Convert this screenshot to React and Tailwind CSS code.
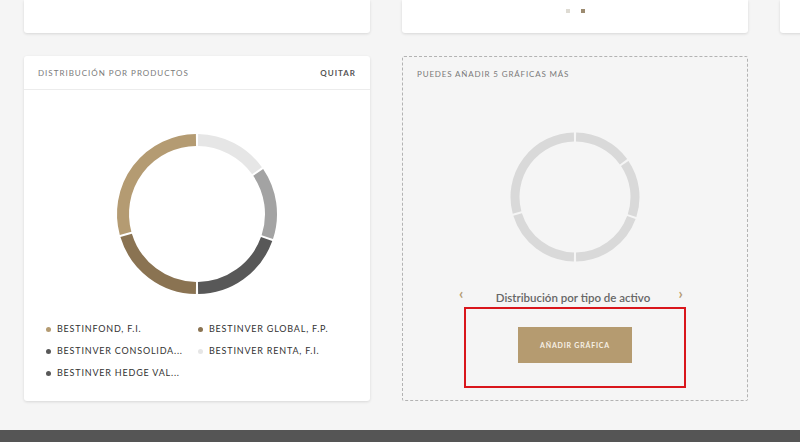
import React from 'react';

const font = { fontFamily: 'Lato, "Open Sans", sans-serif' };

function arcPath(cx, cy, r, a0, a1) {
  const rad = a => ((a - 90) * Math.PI) / 180;
  const x0 = cx + r * Math.cos(rad(a0));
  const y0 = cy + r * Math.sin(rad(a0));
  const x1 = cx + r * Math.cos(rad(a1));
  const y1 = cy + r * Math.sin(rad(a1));
  const large = a1 - a0 > 180 ? 1 : 0;
  return `M ${x0} ${y0} A ${r} ${r} 0 ${large} 1 ${x1} ${y1}`;
}

// segment boundaries in degrees, clockwise from top
const segments = [
  { from: 0, to: 55, color: '#e6e6e6' },
  { from: 55, to: 109, color: '#a3a3a3' },
  { from: 109, to: 180, color: '#585858' },
  { from: 180, to: 254, color: '#8a7352' },
  { from: 254, to: 360, color: '#b49b72' },
];

function Donut({ size, r, width, gap, colorFor }) {
  const c = size / 2;
  return (
    <svg width={size} height={size} viewBox={`0 0 ${size} ${size}`}>
      {segments.map((s, i) => (
        <path
          key={i}
          d={arcPath(c, c, r, s.from + gap, s.to - gap)}
          fill="none"
          stroke={colorFor(s)}
          strokeWidth={width}
        />
      ))}
    </svg>
  );
}

const legend = [
  { label: 'BESTINFOND, F.I.', color: '#b49b72' },
  { label: 'BESTINVER GLOBAL, F.P.', color: '#8a7352' },
  { label: 'BESTINVER CONSOLIDA...', color: '#585858' },
  { label: 'BESTINVER RENTA, F.I.', color: '#e6e6e6' },
  { label: 'BESTINVER HEDGE VAL...', color: '#585858' },
];

export default function App() {
  return (
    <div className="w-[800px] h-[442px] bg-[#f5f5f5] overflow-hidden flex flex-col" style={font}>
      {/* top row (cut off) */}
      <div className="flex gap-8 pl-6 h-[33px] shrink-0">
        <div className="w-[346px] shrink-0 bg-white rounded-b-[3px] shadow-[0_1px_3px_rgba(0,0,0,0.12)]" />
        <div className="w-[346px] shrink-0 bg-white rounded-b-[3px] shadow-[0_1px_3px_rgba(0,0,0,0.12)] flex justify-center pt-[9px] gap-[11px]">
          <span className="w-[4px] h-[4px] bg-[#dedbd3]" />
          <span className="w-[4px] h-[4px] bg-[#9c8b70]" />
        </div>
        <div className="w-[346px] shrink-0 bg-white rounded-b-[3px] shadow-[0_1px_3px_rgba(0,0,0,0.12)]" />
      </div>

      {/* chart row */}
      <div className="flex gap-8 pl-6 mt-[23px] h-[345px] shrink-0">
        <div className="w-[346px] shrink-0 bg-white rounded-[3px] shadow-[0_1px_3px_rgba(0,0,0,0.12)] flex flex-col">
          <div className="h-[34px] flex items-center justify-between px-[14px] border-b border-[#ececec]">
            <span className="text-[8px] tracking-[1px] text-[#7a7a7a]">DISTRIBUCIÓN POR PRODUCTOS</span>
            <span className="text-[8px] tracking-[1px] font-bold text-[#555]">QUITAR</span>
          </div>
          <div className="flex justify-center mt-[39px]">
            <Donut size={170} r={74} width={12} gap={0.8} colorFor={s => s.color} />
          </div>
          <div className="grid grid-cols-[152px_1fr] pl-[22px] mt-[19px]">
            {legend.map(item => (
              <div key={item.label} className="h-[22px] flex items-center gap-[6px]">
                <span className="w-[5px] h-[5px] rounded-full" style={{ background: item.color }} />
                <span className="text-[9px] tracking-[0.8px] text-[#333]">{item.label}</span>
              </div>
            ))}
          </div>
        </div>

        <div className="w-[346px] shrink-0 border border-dashed border-[#b3b3b3] rounded-[2px] flex flex-col items-center">
          <div className="self-stretch h-[33px] flex items-center px-[14px]">
            <span className="text-[8px] tracking-[0.85px] text-[#7a7a7a]">PUEDES AÑADIR 5 GRÁFICAS MÁS</span>
          </div>
          <div className="mt-[42px]">
            <Donut size={130} r={60} width={9} gap={1} colorFor={() => '#d9d9d9'} />
          </div>
          <div className="w-[224px] mr-[8px] flex items-center justify-between mt-[28px] h-[16px]">
            <span className="text-[15px] leading-none font-bold text-[#b49b72] -mt-[9px]">‹</span>
            <span className="text-[11.5px] font-semibold text-[#666] ml-[4px]">Distribución por tipo de activo</span>
            <span className="text-[15px] leading-none font-bold text-[#b49b72] -mt-[9px]">›</span>
          </div>
          <div className="mt-[1px] w-[222px] h-[81px] border-2 border-[#d9161c] flex justify-center pt-[18px]">
            <button className="w-[114px] h-[36px] bg-[#b59b70] text-[7px] font-bold tracking-[0.8px] text-[#f7f1e6]">
              AÑADIR GRÁFICA
            </button>
          </div>
        </div>

        <div className="w-[346px] shrink-0" />
      </div>

      <div className="mt-[29px] flex-1 bg-[#555555]" />
    </div>
  );
}
